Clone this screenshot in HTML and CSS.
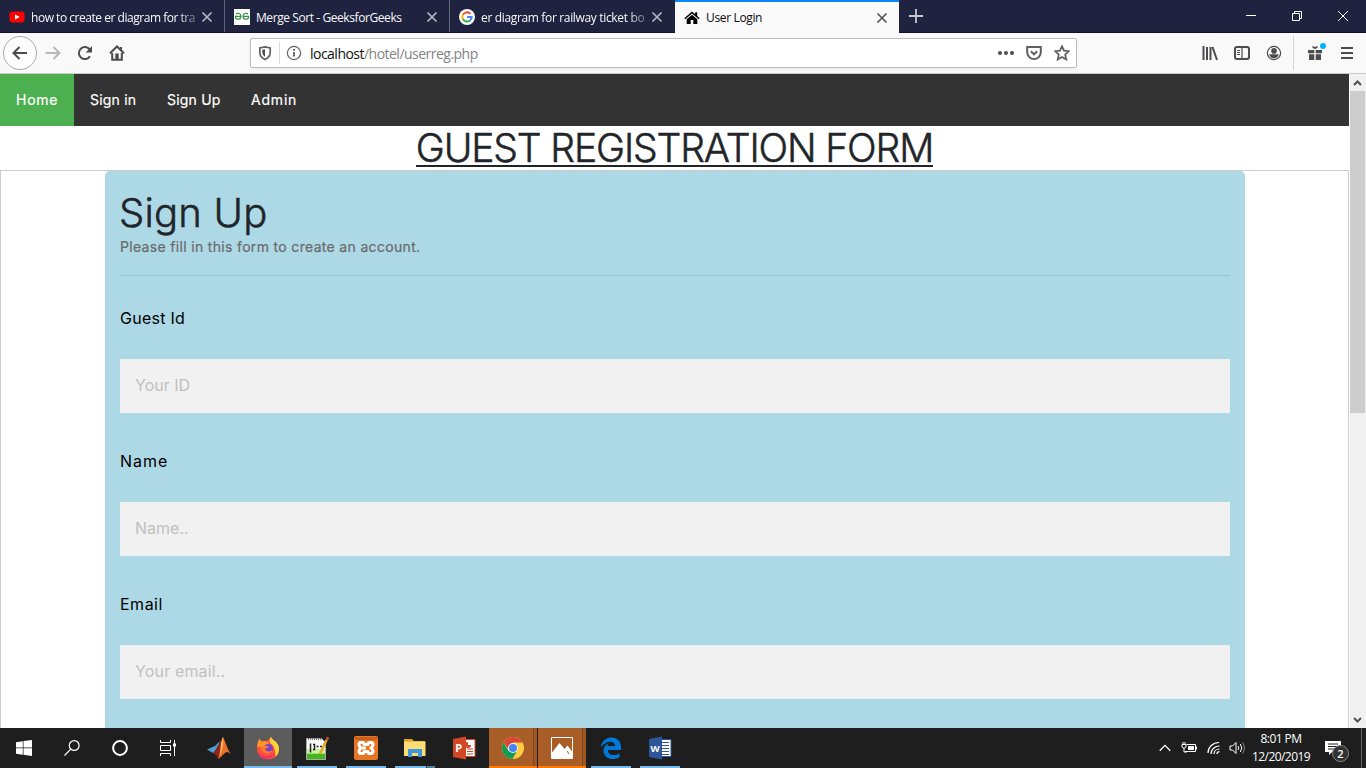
FILE: index.html
```html
<!DOCTYPE html>
<html lang="en">
<head>
<meta charset="utf-8">
<title>User Login</title>
<link rel="stylesheet" href="styles.css">
</head>
<body>
<div class="screen">
  <header class="tabs">
    <div class="tab">
      <svg class="fav" viewBox="0 0 16 16"><rect x=".5" y="2.5" width="15" height="11" rx="3" fill="#f00"/><path d="M6 5.4v5.2L10.7 8z" fill="#fff"/></svg>
      <span class="tab-title fade t1">how to create er diagram for tra</span>
      <svg class="close" viewBox="0 0 12 12"><path d="M1.5 1.5l9 9M10.500 1.500l-9 9"/></svg>
    </div>
    <div class="tab">
      <svg class="fav" viewBox="0 0 16 16"><path d="M0 0h16v16H0z" fill="#fff"/><g fill="none" stroke="#2f8d46" stroke-width="1.2"><path d="M2 5C3.500 3.800 7 4.200 7 7.400S3.500 11 1.500 9V7.400H7M14 5C12.500 3.800 9 4.200 9 7.400s3.500 3.600 5.500 1.600V7.400H9"/></g></svg>
      <span class="tab-title t2">Merge Sort - GeeksforGeeks</span>
      <svg class="close" viewBox="0 0 12 12"><path d="M1.500 1.500l9 9M10.500 1.500l-9 9"/></svg>
    </div>
    <div class="tab last">
      <svg class="fav" viewBox="0 0 16 16"><circle cx="8" cy="8" r="8" fill="#fff"/><g fill="none" stroke-width="2"><path d="M4 5.700A4.700 4.700 0 0 1 11.400 4.700" stroke="#ea4335"/><path d="M4 5.600a4.700 4.700 0 0 0 0 4.800" stroke="#fbbc05"/><path d="M4 10.300a4.700 4.700 0 0 0 7 1.200" stroke="#34a853"/><path d="M8 8h4.700a4.700 4.700 0 0 1-1.700 3.500" stroke="#4285f4"/></g></svg>
      <span class="tab-title fade t3">er diagram for railway ticket bo</span>
      <svg class="close" viewBox="0 0 12 12"><path d="M1.500 1.500l9 9M10.500 1.500l-9 9"/></svg>
    </div>
    <div class="tab active">
      <svg class="fav" viewBox="0 0 16 16"><path d="M8 1.500L.3 8.200l1 1L8 3.600l6.700 5.600 1-1-2.500-2.200V2.200h-2v2.100z" /><path d="M8 4.800L2.700 9.200v4.800h4v-4h2.600v4h4V9.200z"/></svg>
      <span class="tab-title t4">User Login</span>
      <svg class="close" viewBox="0 0 12 12"><path d="M1.500 1.500l9 9M10.500 1.500l-9 9"/></svg>
    </div>
    <svg class="newtab" viewBox="0 0 14 14"><path d="M7 0v14M0 7h14"/></svg>
    <div class="winctl">
      <svg viewBox="0 0 12 12"><path d="M1 5.500h10"/></svg>
      <svg viewBox="0 0 12 12"><path d="M1.500 3.500h7v7h-7zM3.500 3.500v-2h7v7h-2"/></svg>
      <svg viewBox="0 0 12 12"><path d="M1 1l10 10M11 1L1 11"/></svg>
    </div>
  </header>

  <div class="toolbar">
    <span class="back"><svg viewBox="0 0 16 16"><path d="M15 8H1.500M7.500 2L1.500 8l6 6"/></svg></span>
    <svg class="ic fwd" viewBox="0 0 16 16"><path d="M.5 8h14M8.500 2l6 6-6 6"/></svg>
    <svg class="ic reload" viewBox="0 0 16 16"><path d="M13 11.200A6 6 0 1 1 12.800 4.600"/><path d="M15 1v6.500H8.700z" class="solid"/></svg>
    <svg class="ic home" viewBox="0 0 16 16"><path d="M1 8.300L8 1.500l7 6.800M3.200 8v6.800h9.600V8"/><path d="M6.300 8.500h3.400V14H6.300zM11 2h2v4h-2z" class="solid"/></svg>
    <div class="urlbar">
      <svg class="shield" viewBox="0 0 14 16"><path d="M7 1.800L12.200 3v4.500c0 3-2 5.500-5.200 7-3.200-1.500-5.200-4-5.200-7V3z"/><path d="M7 4.200v7.500C5.300 10.600 4.300 9 4.300 7.200V4.800z" class="solid"/></svg>
      <i class="bar"></i>
      <svg class="info" viewBox="0 0 16 16"><circle cx="8" cy="8" r="6.600"/><path d="M8 7v4.500M8 4v1.700" stroke-width="1.800"/></svg>
      <span class="url"><b>localhost</b>/hotel/userreg.php</span>
      <svg class="dots" viewBox="0 0 16 16"><g class="solid"><circle cx="2" cy="8" r="2"/><circle cx="8" cy="8" r="2"/><circle cx="14" cy="8" r="2"/></g></svg>
      <svg class="pocket" viewBox="0 0 16 16"><path d="M1.200 2h13.600v5.300a6.800 6.800 0 0 1-13.600 0z"/><path d="M4.800 6.300L8 9.300l3.200-3"/></svg>
      <svg class="star" viewBox="0 0 16 16"><path d="M8 1.200l2 4.500 4.900.5-3.700 3.300 1.100 5L8 11.900l-4.300 2.600 1.100-5L1.100 6.200 6 5.700z"/></svg>
    </div>
    <div class="tools">
      <svg viewBox="0 0 16 16"><path d="M1.500 1v14M5 2v13M8.500 2v13M10.500 2l4.500 13"/></svg>
      <svg viewBox="0 0 16 16"><rect x="1" y="2" width="14" height="12" rx="2"/><path d="M8 2v12" stroke-width="1.200"/><path d="M3 5.500h3M3 7.500h3M3 9.500h3" stroke-width="1"/></svg>
      <svg viewBox="0 0 16 16"><circle cx="8" cy="8" r="6.600" stroke-width="1.200"/><circle cx="8" cy="5.900" r="2.800" class="solid"/><path d="M3.400 9.300h9.200c-.2 2.300-2 4-4.600 4s-4.400-1.700-4.600-4z" class="solid"/></svg>
      <span class="gift"><svg viewBox="0 0 16 16"><g class="solid"><path d="M1 5h6.300v3.200H1zM8.700 5H15v3.200H8.700zM2 9.300h5.300V15H2zM8.700 9.300H14V15H8.700z"/><path d="M5.500 1l2.500 1 2.500-1v2L8 4 5.500 3z"/></g></svg></span>
      <svg viewBox="0 0 16 16"><path d="M2 3h12M2 8h12M2 13h12"/></svg>
    </div>
  </div>

  <div class="viewport">
    <main class="page">
      <nav class="nav">
        <a class="n1 current">Home</a><a class="n2">Sign in</a><a class="n3">Sign Up</a><a class="n4">Admin</a>
      </nav>
      <h1 class="title"><span>GUEST REGISTRATION FORM</span></h1>
      <form class="form">
        <div class="container">
          <h2 class="signup">Sign Up</h2>
          <p class="lead">Please fill in this form to create an account.</p>
          <hr class="rule">
          <label class="label l1">Guest Id</label>
          <div class="field f1">Your ID</div>
          <label class="label l2">Name</label>
          <div class="field f2">Name..</div>
          <label class="label l3">Email</label>
          <div class="field f3">Your email..</div>
        </div>
      </form>
    </main>
    <div class="scroll">
      <svg viewBox="0 0 9 6"><path d="M1 5l3.500-3.500L8 5"/></svg>
      <i class="thumb"></i>
      <svg class="down" viewBox="0 0 9 6"><path d="M1 1l3.500 3.500L8 1"/></svg>
    </div>
  </div>

  <footer class="taskbar">
    <div class="sys">
      <svg viewBox="0 0 16 16" width="16" height="16"><path fill="#fff" d="M0 2.200L6.800 1.200v6.300H0zM7.500 1.100L16 0v7.500H7.500zM0 8.300h6.800v6.400L0 13.800zM7.500 8.300H16V16l-8.500-1.200z"/></svg>
      <svg viewBox="0 0 16 16" width="16" height="16" fill="none" stroke="#fff" stroke-width="1.200"><circle cx="10.200" cy="5.500" r="4.900"/><path d="M6.700 9.200L.5 15.500"/></svg>
      <svg viewBox="0 0 16 16" width="16" height="16" fill="none" stroke="#fff" stroke-width="2"><circle cx="8" cy="8" r="6.900"/></svg>
      <svg viewBox="0 0 16 16" width="16" height="16" fill="none" stroke="#fff"><path d="M.5 0v2.500h10V0M.5 5.500h10v5H.5zM.5 16v-2.500h10V16M14.500 0v16"/><path d="M13 3.500h3v3h-3z" fill="#fff" stroke="none"/></svg>
    </div>
    <div class="apps">
      <span class="app"><svg viewBox="0 0 24 24"><path fill="#4aa3da" d="M0 13.500l8-3.500 5-5-3 10-4 2z"/><path fill="#8f2418" d="M9 13l4-7 3-5 1 8-2 12-4 2-2-4-3-2z"/><path fill="#e8702a" d="M16 1c2 3 4 12 8 17-3-2-4-3-6-1l-7 6c3-6 3-14 5-22z"/><path fill="#f6bd5a" d="M16 1c1 5 0 13-4 20 2-7 1-14 4-20z"/></svg></span>
      <span class="app focus on"><svg viewBox="0 0 24 24"><path fill="#ff4f3b" d="M1.500 9L4 4l2 2 4-1 5-3 6 6 1.500 6c0 5-4.500 9.500-10.500 9.500S1 19 1 13z"/><path fill="#ffd23a" d="M15 .5c0 3 6 4 7.800 10 .8 4-.5 8-3.300 10.500C20 15 18 9 14 7c-1-2 0-5 1-6.500z"/><path fill="#ff9429" d="M1.200 11C1 7 3 3 4 2.500c0 2 1 3 2 3 3-1 6 0 7 2L8 11z"/><path fill="#f0336b" d="M1.200 14c3 7 12 8 17.500 3-3 9-16 8-17.500-3z"/><circle cx="12.300" cy="12.500" r="4.600" fill="#7542c9"/><path fill="#ff7a2e" d="M5 11c3-2 6-1 8-.5-1 1.500-3 1.500-4 2.500 1 3 5 3 7.500 1-1 5-12 5-11.500-3z"/></svg></span>
      <span class="app on"><svg viewBox="0 0 24 24"><path fill="#f8f8f8" stroke="#aaa" d="M1.500 2.500h15l4 4v17h-19z"/><path fill="#45b51d" d="M2 17h18v6H2z"/><path fill="#b9f08b" d="M2 13h18v5H2z" opacity=".8"/><path d="M3 3h13" stroke="#777" stroke-dasharray="1 1" stroke-width="2"/><path d="M5.500 7.500v9M8 8.500h1.500v5H8M11.500 10.500h2M15 10.500h2" fill="none" stroke="#222" stroke-width="1.500"/><path d="M21.500 4L15 18" stroke="#e6aa22" stroke-width="2.600"/><path d="M23 1l-1.200 3" stroke="#c44f47" stroke-width="2.600"/></svg></span>
      <span class="app on"><svg viewBox="0 0 24 24"><rect width="24" height="24" rx="2" fill="#e87524"/><path d="M1 1h22v3H1z" fill="#c7611e"/><path fill="none" stroke="#fff" stroke-width="3" stroke-linejoin="round" d="M5 6.500h3.500q1.500 0 1.500 1.500v.500h4V8q0-1.500 1.500-1.500H17q2 0 2 2.200 0 2-2.200 3.300Q19 13.300 19 15.300q0 2.200-2 2.200h-1.500q-1.500 0-1.500-1.500v-.500h-4v.500q0 1.500-1.500 1.500H7q-2 0-2-2.200 0-2 2.200-3.300Q5 10.700 5 8.700 5 6.500 7 6.500M7.200 12H12"/></svg></span>
      <span class="app on split"><svg viewBox="0 0 24 24"><path fill="#dea316" d="M1 3h8l2 2h11v5H1z"/><path fill="#fddc75" d="M1 5.500h21.500V20H1z"/><path fill="#3b98dc" d="M5 13h14v8h-4v-4H9v4H5z"/></svg></span>
      <span class="app"><svg viewBox="0 0 24 24"><path fill="#fff" stroke="#d24726" d="M12 3.500h11v17H12z"/><path d="M15 13h6M15 15.500h6M15 18h6" stroke="#d24726"/><path fill="#d24726" d="M16 6a3 3 0 1 0 3 3h-3z"/><path fill="#d24726" d="M1 3l13-2.500v23L1 21z"/><text x="3.200" y="16" class="logo-letter">P</text></svg></span>
      <span class="app hot"><svg viewBox="0 0 24 24"><circle cx="12" cy="12" r="11" fill="#ffcd40"/><path fill="#dc4437" d="M2.500 6.500A11 11 0 0 1 21.500 6.500H12L8 14z"/><path fill="#109d58" d="M2.500 6.500L7.500 15l8 1-4 7A11 11 0 0 1 2.500 6.500z"/><circle cx="12" cy="12" r="5" fill="#f2f2f2"/><circle cx="12" cy="12" r="4" fill="#4285f4"/></svg></span>
      <span class="app hot"><svg viewBox="0 0 24 24"><path fill="none" stroke="#fff" d="M1.500 1.500h21v21h-21z"/><path fill="#fff" d="M2 16.500L9.500 7l5 6 3-3.500 5 6.500v7H2z"/><path d="M17 15l2 3" stroke="#a85e26"/></svg></span>
      <span class="app on"><svg viewBox="0 0 24 24"><path fill="#0078d7" d="M2 11C3 4 8 1.500 12.500 1.500 19 1.500 22 6 22 11v3H9c0 6 7 6 11.500 3.500v4C13 25 4 22 4.500 14 5 10 8 8 10 7c-1 1-1.500 2.500-1.500 3H16c0-6-9-5.500-14 1z"/></svg></span>
      <span class="app on"><svg viewBox="0 0 24 24"><path fill="#fff" stroke="#2b579a" d="M12 3.500h11v17H12z"/><path d="M14 6.500h7M14 9.500h7M14 12.500h7M14 15.500h7M14 18.500h7" stroke="#2b579a"/><path fill="#2b579a" d="M1 3l13-2.500v23L1 21z"/><text x="2.600" y="15.500" class="logo-letter small">W</text></svg></span>
    </div>
    <div class="tray">
      <svg width="12" height="8" viewBox="0 0 12 8"><path d="M.7 6.700L6 1.400l5.300 5.300" stroke-width="1.300"/></svg>
      <svg width="16" height="12" viewBox="0 0 16 12"><path d="M5.500 2.500h9v7H4M15.500 4.500v3M1 2.500h4v2.500L3 6.500 1 5zM2 0v2M4 0v2M3 6v4h3"/><path d="M7 4h6v4H7z" fill="#fff" stroke="none"/></svg>
      <svg class="wifi" width="14" height="14" viewBox="0 0 14 14"><path d="M1 12C1 6 6 1.500 12 1.500M4 13c0-4.500 4-8 8.500-8M7 13c0-3 2.500-5 5.500-5M10 13c0-1.500 1.200-2.300 2.500-2.300" stroke-width="1.200"/></svg>
      <svg class="speaker" width="17" height="14" viewBox="0 0 17 14"><path d="M1 5h2.500L7 1.500v11L3.500 9H1zM9 5q1.500 2 0 4M11.300 3q3 4 0 8" /><path d="M13.500 1.500q4 5.500 0 11" stroke="#888"/></svg>
      <div class="clock"><span class="time">8:01 PM</span><span class="date">12/20/2019</span></div>
      <span class="notice"><svg width="16" height="16" viewBox="0 0 16 16"><path fill="#fff" stroke="none" d="M0 1h16v11H7l-3 3v-3H0z"/><path d="M3 4h10M3 6.500h10M3 9h6" stroke="#222"/></svg><b class="count">2</b></span>
      <i class="desk"></i>
    </div>
  </footer>
</div>
</body>
</html>
```
FILE: styles.css
```css
* { box-sizing: border-box; }
body { margin: 0; overflow: hidden; }
.screen { width: 1366px; height: 768px; display: flex; flex-direction: column; font-family: "Open Sans", sans-serif; background: #fff; }
svg { display: block; flex: none; }

.tabs { height: 33px; flex: none; display: flex; align-items: stretch; background: #202340; border-bottom: 1px solid #11132b; }
.tab { width: 225px; height: 32px; padding: 2px 11px 0 9px; display: flex; align-items: center; border-right: 1px solid #62647a; color: #f9f9fa; font-size: 12px; }
.tab.last { border-right: 0; padding-right: 12px; }
.tab.active { width: 224px; height: 33px; background: #f9f9f9; color: #0c0c0d; border-right: 0; border-top: 2px solid #0a84ff; padding-top: 0; }
.fav { width: 16px; height: 16px; margin-right: 6px; }
.tab-title { flex: 1; white-space: nowrap; line-height: 18px; letter-spacing: -.42px; padding-top: 1px; }
.t1 { letter-spacing: -.47px; }
.t3 { letter-spacing: -.34px; }
.t4 { letter-spacing: -.35px; }
.fade { mask-image: linear-gradient(90deg, #000 88%, #0004); }
.close { width: 12px; height: 12px; fill: none; stroke: #b9bac5; stroke-width: 1.6; margin-left: 4px; }
.active .close { stroke: #505054; }
.newtab { width: 14px; height: 14px; margin: 9px 0 0 10px; stroke: #c5c6d0; stroke-width: 1.800; }
.winctl { margin: 10px 17px 0 auto; display: flex; gap: 34px; }
.winctl svg { width: 12px; height: 12px; fill: none; stroke: #fff; stroke-width: 1; }

.toolbar { height: 41px; flex: none; display: flex; align-items: center; padding-left: 3px; background: #f9f9fa; border-bottom: 1px solid #ccc; }
.toolbar svg { width: 16px; height: 16px; fill: none; stroke: #4c4c4f; stroke-width: 2; }
.toolbar .solid { fill: #4c4c4f; stroke: none; }
.back { width: 34px; height: 34px; border: 1px solid #aaa; border-radius: 50%; display: flex; align-items: center; justify-content: center; background: #fdfdfd; }
.toolbar .fwd { margin-left: 8px; stroke: #b8b8b9; }
.toolbar .reload { margin-left: 16px; }
.toolbar .home { margin-left: 16px; }
.urlbar { width: 827px; height: 30px; margin-left: 125px; display: flex; align-items: center; background: #fff; border: 1px solid #bcbcbe; border-radius: 2px; box-shadow: 0 1px 3px #0001; }
.urlbar .shield { width: 14px; margin-left: 7px; stroke: #606063; stroke-width: 1.700; }
.bar { width: 1px; height: 22px; background: #dcdcdc; margin: 0 6px 0 7px; }
.urlbar .info { stroke: #606063; stroke-width: 1.200; }
.url { font-size: 14px; line-height: 20px; color: #838383; margin: 2px auto 0 8px; letter-spacing: -.52px; }
.url b { font-weight: 400; color: #111; }
.urlbar .pocket { margin-left: 12px; stroke: #606063; }
.urlbar .star { margin: 0 6px 0 12px; stroke: #606063; stroke-width: 1.700; }
.tools { margin-left: auto; padding-right: 19px; display: flex; align-items: center; gap: 16px; align-self: stretch; }
.gift { position: relative; height: 34px; border-left: 1px solid #d5d5d6; padding-left: 13px; margin-left: -5px; display: flex; align-items: center; }
.gift::after { content: ""; position: absolute; right: -3px; top: 7px; width: 6px; height: 6px; border-radius: 50%; background: #00b3ff; }
.tools > svg:last-child { margin-right: -8px; margin-left: 0; }

.viewport { height: 654px; flex: none; display: flex; overflow: hidden; font-family: Inter, "Liberation Sans", sans-serif; }
.page { width: 1349px; height: 654px; flex: none; overflow: hidden; }
.nav { height: 52px; display: flex; background: #333; color: #fff; font-size: 14px; line-height: 52px; font-weight: 400; }
.nav a { padding-left: 16px; white-space: nowrap; -webkit-text-stroke: .2px currentColor; }
.nav .current { background: #4caf50; }
.n1 { width: 74px; letter-spacing: .75px; } .n2 { width: 77px; letter-spacing: .2px; } .n3 { width: 84px; letter-spacing: .2px; } .n4 { width: 90px; letter-spacing: .8px; }
.title { margin: 0; height: 44px; text-align: center; color: #212529; font-size: 39px; font-weight: 300; line-height: 44px; white-space: nowrap; letter-spacing: -1.12px; -webkit-text-stroke: .5px #212529; }
.title span { display: inline-block; height: 41px; border-bottom: 2px solid #212529; }
.form { border: 1px solid #ccc; padding: 0 103px 0 104px; height: 700px; }
.container { background: #add8e6; border-radius: 5px; padding: 15px; height: 700px; overflow: hidden; }
.signup { margin: 0 0 0 -1px; height: 49px; font-size: 40px; line-height: 54px; font-weight: 300; color: #212529; white-space: nowrap; letter-spacing: .2px; -webkit-text-stroke: .5px #212529; }
.lead { margin: 0; height: 24px; font-size: 14px; line-height: 24px; color: #6b6b6b; white-space: nowrap; font-weight: 400; letter-spacing: .33px; -webkit-text-stroke: .2px currentColor; }
.rule { margin: 16px 0 25px; border: 0; border-top: 1px solid #99c1ce; }
.label { display: block; height: 36px; line-height: 35px; font-size: 16px; color: #000; }
.l1 { letter-spacing: .25px; } .l2 { letter-spacing: 1px; } .l3 { letter-spacing: .5px; }
.field { margin: 22px 0 31px; height: 54px; padding-left: 15px; line-height: 53px; font-size: 16px; color: #c0c0c0; background: #f1f1f1; }
.f3 { letter-spacing: .15px; }

.scroll { width: 17px; background: #f0f0f0; border-left: 1px solid #fff; display: flex; flex-direction: column; align-items: flex-start; }
.scroll svg { width: 9px; height: 6px; fill: none; stroke: #505050; stroke-width: 2; margin: 6px 0 0 3px; }
.thumb { width: 15px; height: 322px; margin-top: 5px; background: #cdcdcd; }
.scroll .down { margin: auto 0 5px 3px; }

.taskbar { height: 40px; flex: none; display: flex; background: #1e1e1e; color: #fff; }
.sys { width: 195px; display: flex; align-items: center; padding-left: 16px; gap: 32px; }
.apps { display: flex; gap: 1px; }
.app { width: 48px; height: 40px; padding-top: 8px; display: flex; justify-content: center; background: linear-gradient(#76b9ed, #76b9ed) center bottom / 0 2px no-repeat; }
.app svg { width: 24px; height: 24px; }
.on { background-size: 40px 2px; }
.focus { background-color: #5c5c5c; background-size: 48px 2px; }
.split { background: linear-gradient(90deg, #76b9ed 31px, #2a3c49 31px 32px, #52809f 32px) 4px bottom / 40px 2px no-repeat; }
.hot { background: linear-gradient(#ff7900, #ff7900) bottom / 100% 2px no-repeat, linear-gradient(90deg, #a85e26 44px, #834618 44px 45px, #a05622 45px); }
.logo-letter { font: bold 11px "Noto Sans", sans-serif; fill: #fff; stroke: none; }
.small { font-size: 9.5px; }
.tray { margin-left: auto; display: flex; align-items: center; }
.tray svg { fill: none; stroke: #fff; stroke-width: 1; margin-right: 10px; }
.tray .wifi { margin-right: 8px; }
.tray .speaker { margin-right: 6px; }
.clock { width: 58px; display: flex; flex-direction: column; align-items: center; font-size: 12px; line-height: 18px; margin: 0 15px 0 0; white-space: nowrap; letter-spacing: -.55px; }
.notice { position: relative; width: 26px; }
.count { position: absolute; left: 7px; top: 5px; width: 17px; height: 17px; border: 1px solid #888; border-radius: 50%; background: #333; font-size: 11px; line-height: 15px; text-align: center; font-weight: 600; }
.desk { width: 1px; height: 40px; background: #666; margin: 0 4px 0 10px; }
```
